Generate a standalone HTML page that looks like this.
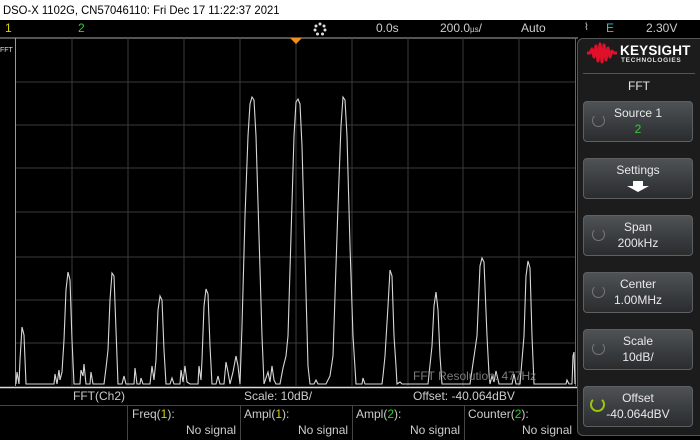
<!DOCTYPE html>
<html><head><meta charset="utf-8"><style>
*{margin:0;padding:0;box-sizing:border-box}
body{width:700px;height:440px;background:#000;position:relative;overflow:hidden;font-family:"Liberation Sans Narrow","Liberation Sans",sans-serif;color:#ddd}
.a{position:absolute;white-space:nowrap}
#hdr{left:0;top:0;width:700px;height:20px;background:#fff;color:#000;font-size:12px;line-height:20px;padding-left:3px}
#hdr span{display:inline-block;transform:scaleX(0.94);transform-origin:0 50%}
.bar{font-size:12px;line-height:14px;top:21px;color:#ccc}
.btn{position:absolute;left:583px;width:110px;height:41px;border-radius:4px;border:1px solid #5d6063;background:linear-gradient(#505356,#3a3d40 55%,#2a2c2e);text-align:center;font-size:12px;color:#e8e8e8;line-height:16px;padding-top:3px}
.btn .r{position:absolute;left:8px;top:12px;width:13px;height:13px;border:1.5px solid #777;border-radius:50%;border-top-color:transparent}
.m{font-size:12px;color:#ccc;line-height:14px}
</style></head><body>
<div id="hdr" class="a"><span>DSO-X 1102G, CN57046110: Fri Dec 17 11:22:37 2021</span></div>
<div class="a bar" style="left:5px;color:#e0d000">1</div>
<div class="a bar" style="left:78px;color:#3c3">2</div>
<svg class="a" style="left:313px;top:22px" width="14" height="14"><g fill="#ddd"><circle cx="7" cy="2" r="1.5"/><circle cx="11" cy="4" r="1.5"/><circle cx="12" cy="8" r="1.5"/><circle cx="9.5" cy="12" r="1.5"/><circle cx="4.5" cy="12" r="1.5"/><circle cx="2" cy="8" r="1.5"/><circle cx="3" cy="4" r="1.5"/></g></svg>
<div class="a bar" style="left:376px">0.0s</div>
<div class="a bar" style="left:440px">200.0<span style="font-size:8px">µs</span>/</div>
<div class="a bar" style="left:521px">Auto</div>
<div class="a bar" style="left:584px;font-size:10px">⌇</div>
<div class="a bar" style="left:606px;color:#2cc">E</div>
<div class="a bar" style="left:646px">2.30V</div>

<svg class="a" style="left:0;top:36px" width="578" height="354">
<line x1="0" y1="2" x2="578" y2="2" stroke="#aaa" stroke-width="1"/>
<g stroke="#3a3a3a" stroke-width="1">
<line x1="72" y1="2" x2="72" y2="350"/><line x1="128" y1="2" x2="128" y2="350"/><line x1="184" y1="2" x2="184" y2="350"/><line x1="240" y1="2" x2="240" y2="350"/><line x1="296" y1="2" x2="296" y2="350"/><line x1="352" y1="2" x2="352" y2="350"/><line x1="408" y1="2" x2="408" y2="350"/><line x1="463" y1="2" x2="463" y2="350"/><line x1="519" y1="2" x2="519" y2="350"/>
<line x1="15" y1="46" x2="575" y2="46"/><line x1="15" y1="89" x2="575" y2="89"/><line x1="15" y1="132" x2="575" y2="132"/><line x1="15" y1="176" x2="575" y2="176"/><line x1="15" y1="221" x2="575" y2="221"/><line x1="15" y1="264" x2="575" y2="264"/><line x1="15" y1="307" x2="575" y2="307"/>
</g>
<line x1="15.5" y1="2" x2="15.5" y2="350" stroke="#999"/>
<line x1="575.5" y1="2" x2="575.5" y2="350" stroke="#666"/>
<path d="M296 2v6" stroke="#666"/>
<polygon points="290,2 302,2 296,8" fill="#f09020"/>
<text x="0" y="16" font-size="7" fill="#ddd" font-family="Liberation Sans">FFT</text>
<polyline fill="none" stroke="#d8d8d8" stroke-width="1.1" points="16,348 17,336 19,348 20,324 22,291 24,299 26,348 32,348 54,348 55,338 57,348 59,334 60,344 62,336 64,304 66,254 68,236 70,244 72,304 74,348 80,348 81,334 83,340 84,328 86,348 90,348 91,336 93,348 104,348 106,332 108,314 110,264 112,237 114,240 116,294 118,348 122,348 124,340 126,348 134,348 135,332 137,348 140,348 141,342 143,348 150,348 152,330 154,344 156,324 158,274 160,260 162,264 164,314 166,348 170,348 172,342 174,348 180,348 181,334 183,346 185,330 187,346 190,348 198,348 199,330 201,344 202,324 204,270 206,253 208,258 210,310 212,348 216,348 218,340 220,348 224,348 226,326 228,336 230,348 233,336 236,320 238,330 240,348 242,290 245,180 248,100 250,68 252,61 254,64 256,100 259,200 262,300 264,348 268,336 270,346 272,330 274,344 276,348 280,348 283,332 286,320 288,300 291,200 294,100 296,66 298,63 300,68 302,110 305,220 308,330 310,348 314,348 316,344 318,348 326,348 330,340 333,320 335,260 338,170 341,90 343,61 345,64 347,100 350,210 353,300 356,348 362,348 363,342 365,348 382,348 383,340 385,320 388,270 390,234 392,240 394,300 396,330 397,348 400,346 402,348 420,348 428,348 432,310 434,270 436,256 438,274 440,320 442,348 460,348 470,348 477,300 480,230 482,222 484,226 487,300 489,338 490,348 492,340 494,346 496,335 499,348 512,348 514,338 516,348 520,348 524,300 526,240 528,225 530,232 532,300 534,348 544,348 566,348 567,344 569,348 572,348 573,320 574,316 575,348"/>
<text x="413" y="344" font-size="12" fill="#888" fill-opacity="0.9" font-family="Liberation Sans Narrow,Liberation Sans">FFT Resolution: 477Hz</text>
<line x1="0" y1="351.5" x2="578" y2="351.5" stroke="#ddd" stroke-width="1.5"/>
</svg>

<div class="a m" style="left:73px;top:389px">FFT(Ch2)</div>
<div class="a m" style="left:244px;top:389px">Scale: 10dB/</div>
<div class="a m" style="left:413px;top:389px">Offset: -40.064dBV</div>
<div class="a" style="left:0;top:405px;width:578px;height:1px;background:#444"></div>
<div class="a" style="left:127px;top:406px;width:1px;height:34px;background:#444"></div>
<div class="a" style="left:240px;top:406px;width:1px;height:34px;background:#444"></div>
<div class="a" style="left:352px;top:406px;width:1px;height:34px;background:#444"></div>
<div class="a" style="left:464px;top:406px;width:1px;height:34px;background:#444"></div>
<div class="a m" style="left:132px;top:407px">Freq(<span style="color:#e0d000">1</span>):</div>
<div class="a m" style="left:186px;top:423px">No signal</div>
<div class="a m" style="left:244px;top:407px">Ampl(<span style="color:#e0d000">1</span>):</div>
<div class="a m" style="left:298px;top:423px">No signal</div>
<div class="a m" style="left:356px;top:407px">Ampl(<span style="color:#3c3">2</span>):</div>
<div class="a m" style="left:410px;top:423px">No signal</div>
<div class="a m" style="left:468px;top:407px">Counter(<span style="color:#3c3">2</span>):</div>
<div class="a m" style="left:522px;top:423px">No signal</div>

<div class="a" style="left:577px;top:38px;width:130px;height:398px;background:#1c1c1c;border:1px solid #555;border-radius:6px"></div>
<svg class="a" style="left:586px;top:42px" width="32" height="22"><polyline fill="none" stroke="#e0102a" stroke-width="3" stroke-linejoin="round" points="1,11 4,11 6,7 8,15 10,4 12,19 14,2 16,20 18,3 20,18 22,6 24,15 26,9 28,11 31,11"/></svg>
<div class="a" style="left:620px;top:43px;font-family:'Liberation Sans',sans-serif;font-weight:bold;font-size:13.5px;color:#fff;letter-spacing:0.2px">KEYSIGHT</div>
<div class="a" style="left:621px;top:57px;font-family:'Liberation Sans',sans-serif;font-weight:bold;font-size:6.5px;color:#ddd;letter-spacing:0.7px">TECHNOLOGIES</div>
<div class="a" style="left:583px;top:73px;width:112px;height:1px;background:#555"></div>
<div class="a" style="left:578px;top:79px;width:122px;text-align:center;font-size:12px;color:#e8e8e8">FFT</div>

<div class="btn" style="top:101px"><div class="r"></div>Source 1<br><span style="color:#3c3">2</span></div>
<div class="btn" style="top:158px">Settings<br><svg width="26" height="12" style="margin-top:3px"><polygon points="8,0 18,0 18,5 24,5 13,11 2,5 8,5" fill="#fff"/></svg></div>
<div class="btn" style="top:215px"><div class="r"></div>Span<br>200kHz</div>
<div class="btn" style="top:272px"><div class="r"></div>Center<br>1.00MHz</div>
<div class="btn" style="top:329px"><div class="r"></div>Scale<br>10dB/</div>
<div class="btn" style="top:386px"><div class="r" style="border-color:#9c0;border-width:2.5px;border-top-color:transparent;left:6px;top:10px;width:15px;height:15px"></div>Offset<br>-40.064dBV</div>
</body></html>
